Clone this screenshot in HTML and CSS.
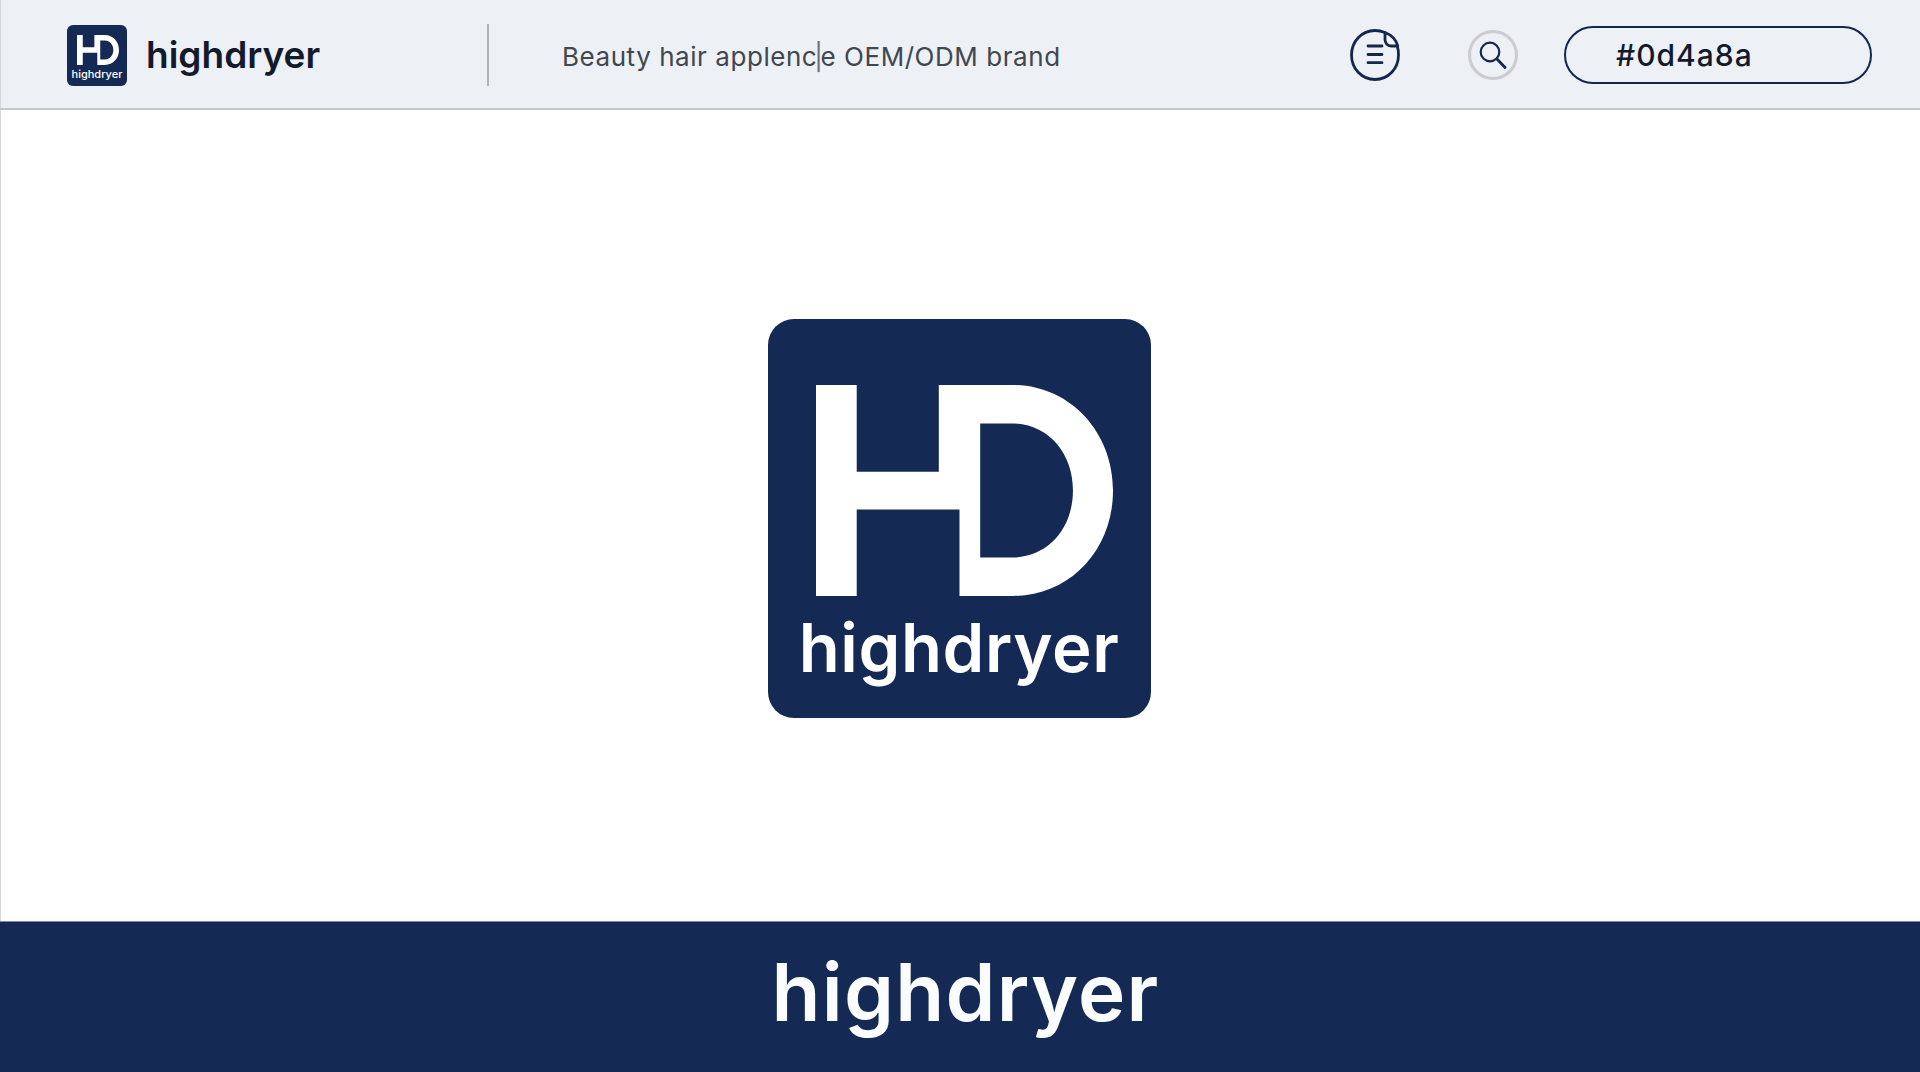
FILE: index.html
```html
<!DOCTYPE html>
<html lang="en">
<head>
<meta charset="utf-8">
<title>highdryer</title>
<link rel="stylesheet" href="styles.css">
</head>
<body>
<svg class="defs" width="0" height="0" aria-hidden="true">
  <symbol id="hd" viewBox="230 255 890 632">
    <path fill="#fff" fill-rule="evenodd" d="M230 255H352V515H598V255H820C990 255 1120 395 1120 571C1120 750 990 887 820 887H660V628H352V887H230ZM722 370V772H815C925 772 1000 685 1000 571C1000 458 925 370 815 370Z"/>
  </symbol>
</svg>
<div class="page">
  <header class="topbar">
    <div class="brand">
      <div class="logo-small">
        <svg class="hd-small"><use href="#hd"/></svg>
        <span class="logo-small-text">highdryer</span>
      </div>
      <span class="brand-name">highdryer</span>
    </div>
    <div class="divider"></div>
    <p class="tagline">Beauty hair applenc<span class="tagline-mark">|</span>e OEM/ODM brand</p>
    <div class="tools">
      <svg class="icon-doc" viewBox="0 0 50 52" fill="none" stroke="#14274e" stroke-width="2.800" stroke-linecap="round" stroke-linejoin="round">
        <path d="M35 3.500C32 2.300 28.500 1.500 25 1.500C11.500 1.500 1.500 12.500 1.500 26C1.500 39.500 11.500 50.500 25 50.500C38.500 50.500 48.500 39.500 48.500 26C48.500 23 48.200 20 47.300 17"/>
        <path fill="#f5f7fb" d="M35 3.500V10.500C35 14 37.500 17 41 17H47.800C46 10.500 41.500 6 35 3.500Z"/>
        <path d="M18 17H32M18 25.500H32M18 33.700H32"/>
      </svg>
      <div class="search-ring">
        <svg class="icon-search" viewBox="0 0 28 28" fill="none" stroke="#14274e" stroke-linecap="round">
          <circle cx="11" cy="11" r="9.300" stroke-width="2.200"/>
          <path d="M18 18L26 26.500" stroke-width="2.800"/>
        </svg>
      </div>
      <div class="color-pill">#0d4a8a</div>
    </div>
  </header>
  <main class="stage">
    <div class="logo-large">
      <svg class="hd-large"><use href="#hd"/></svg>
      <span class="logo-large-text">highdryer</span>
    </div>
  </main>
  <footer class="banner">highdryer</footer>
</div>
</body>
</html>
```
FILE: styles.css
```css
* { box-sizing: border-box; }
html, body { margin: 0; height: 100%; }
body { font-family: Inter, "Noto Sans", sans-serif; background: #fff; overflow: hidden; }
.defs { display: block; height: 0; }
.page { display: flex; flex-direction: column; width: 1920px; height: 1072px; }

.topbar {
  display: flex; align-items: center; flex: 0 0 110px;
  padding: 2px 48px 0 67px;
  background: #edf0f5;
  border-bottom: 2px solid #c6c8cc;
  box-shadow: inset 1px 0 0 #d4d6da;
}
.brand { display: flex; align-items: center; gap: 19px; width: 420px; }
.logo-small {
  display: flex; flex-direction: column; align-items: center;
  width: 60px; height: 61px; padding-top: 9px;
  background: #142a55; border-radius: 6px;
}
.hd-small { display: block; width: 42px; height: 32px; margin-left: 2px; }
.logo-small-text { color: #fff; font-size: 11px; line-height: 13px; margin-top: 2px; font-weight: 500; white-space: nowrap; }
.brand-name { font-size: 37px; font-weight: 600; color: #121a2c; line-height: 44px; }
.divider { width: 2px; height: 62px; background: #aeb2b9; }
.tagline { margin: 2px 0 0 73px; font-size: 26px; font-weight: 400; letter-spacing: 0.55px; color: #41474f; white-space: nowrap; }
.tagline-mark { margin: 0 -3px; color: #6a7078; }

.tools { display: flex; align-items: center; margin-left: auto; }
.icon-doc { display: block; width: 50px; height: 52px; }
.search-ring {
  display: flex; align-items: center; justify-content: center;
  width: 50px; height: 50px; margin-left: 68px;
  border: 3px solid #cbcccf; border-radius: 50%;
}
.icon-search { display: block; width: 28px; height: 28px; }
.color-pill {
  width: 308px; height: 58px; margin-left: 46px; padding-left: 50px;
  display: flex; align-items: center;
  border: 2.500px solid #14274e; border-radius: 29px;
  font-size: 30px; font-weight: 500; letter-spacing: 1px; color: #121a2c;
}

.stage { flex: 1; display: flex; align-items: center; justify-content: center; padding: 6px 2px 0 0; box-shadow: inset 1px 0 0 #d4d6da; }
.logo-large {
  display: flex; flex-direction: column; align-items: center;
  width: 383px; height: 399px; padding-top: 66px;
  background: #142a55; border-radius: 26px;
}
.hd-large { display: block; width: 297px; height: 211px; margin-left: 11px; }
.logo-large-text { color: #fff; font-size: 67px; font-weight: 600; letter-spacing: 0.6px; line-height: 80px; margin-top: 12px; white-space: nowrap; }

.banner {
  flex: 0 0 151px;
  display: flex; justify-content: center;
  background: #142a55;
  border-top: 1px solid #7f8ba3;
  color: #fbfcfe;
  font-size: 80px; font-weight: 600; line-height: 140px; letter-spacing: 1.300px; padding-left: 11px;
}
```
